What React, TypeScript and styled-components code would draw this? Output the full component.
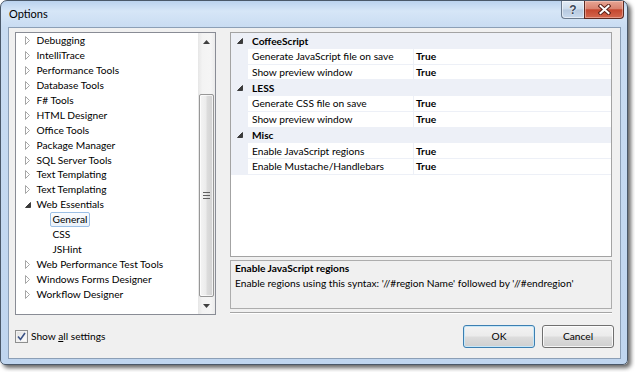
import React from 'react';
import styled, { createGlobalStyle } from 'styled-components';

const LINE = '#edf0f7';

const GlobalStyle = createGlobalStyle`
  html, body { margin: 0; padding: 0; background: #fff; }
  body { font-family: Lato, "Liberation Sans", sans-serif; font-size: 10.2px; color: #000; }
  * { box-sizing: border-box; }
`;

const Stage = styled.div`
  width: 635px;
  height: 372px;
  overflow: hidden;
  background: #fff;
`;

const Window = styled.div`
  width: 628px;
  height: 365px;
  border: 1px solid #4a5869;
  border-radius: 7px 7px 5px 5px;
  background: linear-gradient(180deg, #bad2ee 0px, #d6e6f7 10px, #c9dcf2 26px, #bfd5ef 100%);
  box-shadow: 3px 3px 4px rgba(0, 0, 0, 0.6);
  display: flex;
  flex-direction: column;
  padding: 0 6px 5px 7px;
`;

const TitleBar = styled.div`
  height: 26px;
  display: flex;
  justify-content: space-between;
  align-items: flex-start;
  flex-shrink: 0;
`;

const Title = styled.div`
  font-size: 11px;
  line-height: 16px;
  padding: 5px 0 0 1px;
  color: #000;
`;

const CaptionButtons = styled.div`
  display: flex;
  margin-right: -3px;
  height: 18px;
`;

const HelpButton = styled.div`
  width: 23px;
  height: 18px;
  border: 1px solid #6b7a8d;
  border-top: none;
  border-right: none;
  border-radius: 0 0 0 4px;
  background: linear-gradient(180deg, #e3ecf6 0%, #ccdbeb 48%, #b6c8de 52%, #c9daee 100%);
  box-shadow: inset 0 0 0 1px rgba(255, 255, 255, 0.5);
  display: flex;
  align-items: center;
  justify-content: center;
  font-family: "Liberation Sans", sans-serif;
  font-weight: bold;
  font-size: 12px;
  color: #3a4658;
  text-shadow: 0 0 2px #fff, 0 0 1px #fff;
`;

const CloseButton = styled.div`
  width: 40px;
  height: 18px;
  border: 1px solid #5d2a22;
  border-top: none;
  border-radius: 0 0 4px 0;
  background: linear-gradient(180deg, #e7a594 0%, #d98370 45%, #c4472f 52%, #d3674e 100%);
  box-shadow: inset 0 0 0 1px rgba(255, 220, 210, 0.45);
  display: flex;
  align-items: center;
  justify-content: center;
`;

const Client = styled.div`
  flex: 1;
  border: 1px solid #8c9fb6;
  background: #f0f0f0;
  display: flex;
  flex-direction: column;
  padding: 4px 6px 0 6px;
`;

const TopArea = styled.div`
  display: flex;
  gap: 14px;
  height: 283px;
  margin-right: 2px;
  flex-shrink: 0;
`;

const TreePanel = styled.div`
  width: 201px;
  border: 1px solid #898c95;
  background: #fff;
  display: flex;
`;

const TreeList = styled.div`
  flex: 1;
  display: flex;
  flex-direction: column;
  padding-top: 0.5px;
  overflow: hidden;
`;

const TreeRow = styled.div<{ $level: number }>`
  height: 14.9px;
  flex-shrink: 0;
  display: flex;
  align-items: center;
  padding-left: ${p => 9 + p.$level * 16}px;
  white-space: nowrap;
`;

const Expander = styled.span`
  width: 11.5px;
  display: flex;
  align-items: center;
  flex-shrink: 0;
`;

const TreeLabel = styled.span<{ $selected?: boolean }>`
  height: 15px;
  line-height: 13px;
  padding: 0 2px;
  margin-left: -3px;
  border: 1px solid ${p => (p.$selected ? '#9cc0e6' : 'transparent')};
  border-radius: 2px;
  background: ${p => (p.$selected ? 'linear-gradient(180deg, #fafcfe, #eaf2fb)' : 'transparent')};
`;

const ScrollBar = styled.div`
  width: 17px;
  display: flex;
  flex-direction: column;
  background: linear-gradient(90deg, #e6e6e6 0%, #f3f3f3 25%, #f5f5f5 75%, #ebebeb 100%);
`;

const ArrowButton = styled.div`
  height: 17px;
  display: flex;
  align-items: center;
  justify-content: center;
  flex-shrink: 0;
`;

const Track = styled.div`
  flex: 1;
  display: flex;
  flex-direction: column;
  padding-top: 44px;
`;

const Thumb = styled.div`
  flex: 1;
  margin: 0 1px;
  border: 1px solid #979797;
  border-radius: 2px;
  background: linear-gradient(90deg, #f4f4f4 0%, #ececec 45%, #dcdcdc 55%, #d2d2d2 100%);
  box-shadow: inset 0 0 0 1px rgba(255, 255, 255, 0.7);
  display: flex;
  align-items: center;
  justify-content: center;
`;

const RightColumn = styled.div`
  width: 382px;
  display: flex;
  flex-direction: column;
  gap: 3px;
`;

const Grid = styled.div`
  height: 225px;
  border: 1px solid #a3a3a3;
  background: #fff;
  display: flex;
  flex-direction: column;
  flex-shrink: 0;
`;

const CategoryRow = styled.div`
  height: 15.75px;
  display: flex;
  align-items: center;
  background: ${LINE};
  font-weight: bold;
  flex-shrink: 0;
`;

const Margin = styled.span`
  width: 17px;
  align-self: stretch;
  display: flex;
  align-items: center;
  justify-content: center;
  background: ${LINE};
  flex-shrink: 0;
`;

const CategoryName = styled.span`
  padding-left: 4px;
`;

const PropRow = styled.div`
  height: 15.75px;
  display: grid;
  grid-template-columns: 17px 165px 1fr;
  border-bottom: 1px solid ${LINE};
  flex-shrink: 0;
`;

const PropName = styled.span`
  padding-left: 4px;
  display: flex;
  align-items: center;
  white-space: nowrap;
`;

const PropValue = styled.span`
  padding-left: 2px;
  border-left: 1px solid ${LINE};
  display: flex;
  align-items: center;
  font-weight: bold;
`;

const Description = styled.div`
  height: 49px;
  border: 1px solid #adadad;
  background: #f0f0f0;
  padding: 0 4px;
  flex-shrink: 0;
  line-height: 15px;
`;

const DescTitle = styled.div`
  font-weight: bold;
`;

const Separator = styled.div`
  height: 2px;
  border-top: 1px solid #a5a5a5;
  border-bottom: 1px solid #fff;
  flex-shrink: 0;
`;

const BottomRow = styled.div`
  flex: 1;
  display: flex;
  align-items: center;
  justify-content: space-between;
  padding-bottom: 1px;
`;

const CheckLabel = styled.label`
  display: flex;
  align-items: center;
  gap: 3px;
`;

const CheckBox = styled.span`
  width: 13px;
  height: 13px;
  border: 1px solid #8e8f8f;
  background: linear-gradient(135deg, #dcdcdc 0%, #f4f4f4 60%, #ffffff 100%);
  box-shadow: inset 0 0 0 1px #f2f2f2;
  display: flex;
  align-items: center;
  justify-content: center;
`;

const Buttons = styled.div`
  display: flex;
  gap: 7px;
`;

const Button = styled.div<{ $default?: boolean }>`
  width: 72px;
  height: 23px;
  border: 1px solid ${p => (p.$default ? '#3c7fb1' : '#707070')};
  border-radius: 3px;
  background: linear-gradient(180deg, #f3f3f3 0%, #ebebeb 49%, #dddddd 51%, #cfcfcf 100%);
  box-shadow: inset 0 0 0 1px ${p => (p.$default ? '#c7e7f8' : 'rgba(255,255,255,0.8)')};
  display: flex;
  align-items: center;
  justify-content: center;
`;

const Collapsed = () => (
  <svg width="6" height="9" viewBox="0 0 6 9">
    <path d="M0.5 0.5 L4.5 4.5 L0.5 8.5 Z" fill="#fff" stroke="#a6a6a6" />
  </svg>
);

const Expanded = () => (
  <svg width="6" height="6" viewBox="0 0 6 6">
    <path d="M5.5 0.5 L5.5 5.5 L0.5 5.5 Z" fill="#3a3a3a" stroke="#262626" strokeWidth="0.8" />
  </svg>
);

const UpArrow = () => (
  <svg width="7" height="4" viewBox="0 0 7 4">
    <path d="M0 4 L3.5 0 L7 4 Z" fill="#404040" />
  </svg>
);

const DownArrow = () => (
  <svg width="7" height="4" viewBox="0 0 7 4">
    <path d="M0 0 L3.5 4 L7 0 Z" fill="#404040" />
  </svg>
);

const Grip = () => (
  <svg width="7" height="7" viewBox="0 0 7 7">
    <path d="M0 0.5 H7 M0 3.5 H7 M0 6.5 H7" stroke="#606060" strokeWidth="1" />
  </svg>
);

const CloseGlyph = () => (
  <svg width="13" height="11" viewBox="0 0 13 11">
    <path d="M2.5 2 L10.5 9 M10.5 2 L2.5 9" stroke="#5a2018" strokeWidth="4" strokeLinecap="square" />
    <path d="M2.5 2 L10.5 9 M10.5 2 L2.5 9" stroke="#ffffff" strokeWidth="2" strokeLinecap="square" />
  </svg>
);

const CheckMark = () => (
  <svg width="9" height="9" viewBox="0 0 9 9">
    <path d="M1 4.5 L3.5 7.5 L8 1" fill="none" stroke="#3b5387" strokeWidth="1.6" />
  </svg>
);

type TreeItem = { label: string; level?: number; expanded?: boolean; leaf?: boolean; selected?: boolean };

const treeItems: TreeItem[] = [
  { label: 'Debugging' },
  { label: 'IntelliTrace' },
  { label: 'Performance Tools' },
  { label: 'Database Tools' },
  { label: 'F# Tools' },
  { label: 'HTML Designer' },
  { label: 'Office Tools' },
  { label: 'Package Manager' },
  { label: 'SQL Server Tools' },
  { label: 'Text Templating' },
  { label: 'Text Templating' },
  { label: 'Web Essentials', expanded: true },
  { label: 'General', level: 1, leaf: true, selected: true },
  { label: 'CSS', level: 1, leaf: true },
  { label: 'JSHint', level: 1, leaf: true },
  { label: 'Web Performance Test Tools' },
  { label: 'Windows Forms Designer' },
  { label: 'Workflow Designer' },
];

const categories = [
  {
    name: 'CoffeeScript',
    props: [
      ['Generate JavaScript file on save', 'True'],
      ['Show preview window', 'True'],
    ],
  },
  {
    name: 'LESS',
    props: [
      ['Generate CSS file on save', 'True'],
      ['Show preview window', 'True'],
    ],
  },
  {
    name: 'Misc',
    props: [
      ['Enable JavaScript regions', 'True'],
      ['Enable Mustache/Handlebars', 'True'],
    ],
  },
];

export default function App() {
  return (
    <Stage>
      <GlobalStyle />
      <Window>
        <TitleBar>
          <Title>Options</Title>
          <CaptionButtons>
            <HelpButton>?</HelpButton>
            <CloseButton>
              <CloseGlyph />
            </CloseButton>
          </CaptionButtons>
        </TitleBar>
        <Client>
          <TopArea>
            <TreePanel>
              <TreeList>
                {treeItems.map((item, i) => (
                  <TreeRow key={i} $level={item.level ?? 0}>
                    <Expander>
                      {item.leaf ? null : item.expanded ? <Expanded /> : <Collapsed />}
                    </Expander>
                    <TreeLabel $selected={item.selected}>{item.label}</TreeLabel>
                  </TreeRow>
                ))}
              </TreeList>
              <ScrollBar>
                <ArrowButton>
                  <UpArrow />
                </ArrowButton>
                <Track>
                  <Thumb>
                    <Grip />
                  </Thumb>
                </Track>
                <ArrowButton>
                  <DownArrow />
                </ArrowButton>
              </ScrollBar>
            </TreePanel>
            <RightColumn>
              <Grid>
                {categories.map(cat => (
                  <React.Fragment key={cat.name}>
                    <CategoryRow>
                      <Margin>
                        <Expanded />
                      </Margin>
                      <CategoryName>{cat.name}</CategoryName>
                    </CategoryRow>
                    {cat.props.map(([n, v]) => (
                      <PropRow key={n}>
                        <Margin />
                        <PropName>{n}</PropName>
                        <PropValue>{v}</PropValue>
                      </PropRow>
                    ))}
                  </React.Fragment>
                ))}
              </Grid>
              <Description>
                <DescTitle>Enable JavaScript regions</DescTitle>
                <div>Enable regions using this syntax: '//#region Name' followed by '//#endregion'</div>
              </Description>
              <Separator />
            </RightColumn>
          </TopArea>
          <BottomRow>
            <CheckLabel>
              <CheckBox>
                <CheckMark />
              </CheckBox>
              <span>
                Show <u>a</u>ll settings
              </span>
            </CheckLabel>
            <Buttons>
              <Button $default>OK</Button>
              <Button>Cancel</Button>
            </Buttons>
          </BottomRow>
        </Client>
      </Window>
    </Stage>
  );
}
